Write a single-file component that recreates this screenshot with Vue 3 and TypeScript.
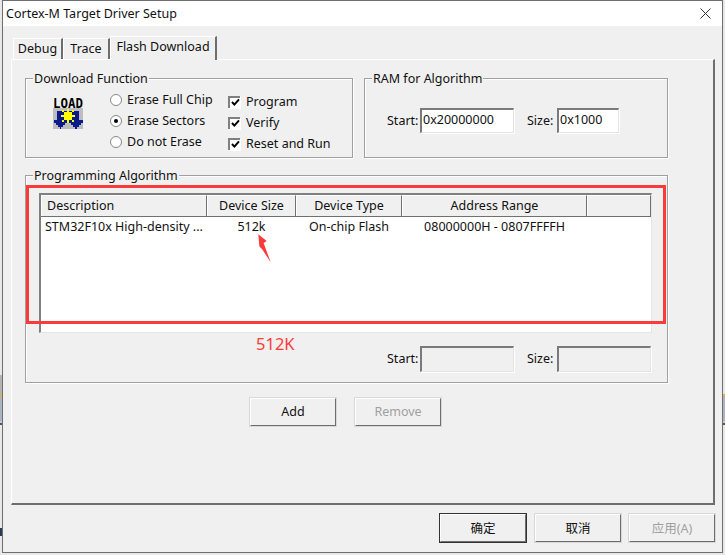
<script setup lang="ts">
const radios = [
  { label: 'Erase Full Chip', on: false },
  { label: 'Erase Sectors', on: true },
  { label: 'Do not Erase', on: false },
]
const checks = ['Program', 'Verify', 'Reset and Run']
const columns = [
  { label: 'Description', width: 166, cls: 'left' },
  { label: 'Device Size', width: 89, cls: '' },
  { label: 'Device Type', width: 106, cls: '' },
  { label: 'Address Range', width: 185, cls: '' },
  { label: '', width: 64, cls: '' },
]
</script>

<template>
  <div class="page">
    <div class="window">
      <header class="titlebar">
        <span>Cortex-M Target Driver Setup</span>
        <svg class="close" width="11" height="11" viewBox="0 0 11 11">
          <path d="M.5.5l10 10M10.5.5l-10 10" stroke="#333" stroke-width="1" fill="none" />
        </svg>
      </header>
      <main class="client">
        <nav class="tabs">
          <span class="tab debug">Debug</span>
          <span class="tab trace">Trace</span>
          <span class="tab active">Flash Download</span>
        </nav>
        <section class="panel">
          <div class="top-row">
            <div class="group download">
              <span class="legend">Download Function</span>
              <svg class="load" width="30" height="31" viewBox="0 0 30 31" shape-rendering="crispEdges">
                <rect y="10" width="30" height="21" fill="#bdbdbd" />
                <text x="0" y="10" textLength="30" lengthAdjust="spacingAndGlyphs" class="load-text">LOAD</text>
                <path fill="#0a1a8c" d="M4 13h22v9h4v3h-2v2h-2v2h-2v2h-2v-2h-2v-2h-2v-2h-2v-3h-2v3h-2v2h-2v2h-2v2H7v-2H5v-2H3v-2H1v-3h3z" />
                <g fill="#ffff00">
                  <rect x="11" y="14" width="8" height="8" />
                  <rect x="8" y="17" width="14" height="2" />
                  <rect x="14" y="11" width="2" height="14" />
                  <rect x="9" y="12" width="2" height="2" />
                  <rect x="19" y="12" width="2" height="2" />
                  <rect x="9" y="22" width="2" height="2" />
                  <rect x="19" y="22" width="2" height="2" />
                </g>
              </svg>
              <div class="radios">
                <div v-for="r in radios" :key="r.label" class="radio-row">
                  <span class="radio" :class="{ on: r.on }"></span>{{ r.label }}
                </div>
              </div>
              <div class="checks">
                <div v-for="c in checks" :key="c" class="check-row">
                  <span class="check">
                    <svg width="9" height="9" viewBox="0 0 9 9"><path d="M1 4l2.4 2.6L8 1.4" stroke="#000" stroke-width="2" fill="none" /></svg>
                  </span>{{ c }}
                </div>
              </div>
            </div>
            <div class="group ram">
              <span class="legend">RAM for Algorithm</span>
              <span class="field-label start">Start:</span>
              <span class="input w-start">0x20000000</span>
              <span class="field-label size">Size:</span>
              <span class="input w-size">0x1000</span>
            </div>
          </div>
          <div class="group algo">
            <span class="legend">Programming Algorithm</span>
            <div class="list">
              <div class="list-head">
                <span
                  v-for="c in columns"
                  :key="c.width"
                  class="head-cell"
                  :class="c.cls"
                  :style="{ width: c.width + 'px' }"
                >{{ c.label }}</span>
              </div>
              <div class="list-row">
                <span class="cell desc">STM32F10x High-density ...</span>
                <span class="cell dsize">512k</span>
                <span class="cell dtype">On-chip Flash</span>
                <span class="cell range">08000000H - 0807FFFFH</span>
              </div>
            </div>
            <div class="algo-fields">
              <span class="field-label start">Start:</span>
              <span class="input disabled w-start">&nbsp;</span>
              <span class="field-label size">Size:</span>
              <span class="input disabled w-wide">&nbsp;</span>
            </div>
          </div>
          <div class="actions">
            <button class="btn">Add</button>
            <button class="btn off">Remove</button>
          </div>
        </section>
        <footer class="footer">
          <button class="btn default">确定</button>
          <button class="btn">取消</button>
          <button class="btn off">应用(A)</button>
        </footer>
      </main>
    </div>
    <div class="red-box"></div>
    <svg class="red-arrow" width="20" height="32" viewBox="0 0 20 32">
      <path d="M1.3.3L9.7 7L6.6 9L13.7 28.3L5 15L2.4 12.5Z" fill="#fb3a3a" />
    </svg>
    <span class="red-label">512K</span>
  </div>
</template>

<style>
html, body { margin: 0; background: #e6e6e6; }
</style>

<style scoped>
.page {
  position: relative;
  width: 725px;
  height: 555px;
  overflow: hidden;
  background:
    linear-gradient(
      transparent 0 375px,
      #b4b4b4 375px 394px,
      transparent 394px 528px,
      #2a3a55 528px 536px,
      transparent 536px
    ) left top / 2px 100% no-repeat,
    linear-gradient(
      #e8e8e8 0 394px,
      #d9b450 394px 397px,
      #a9b4c4 397px 421px,
      #c8c8c8 421px 423px,
      #555 423px 425px,
      #e8e8e8 425px
    );
  font-family: "Noto Sans", "Noto Sans CJK SC", sans-serif;
  font-size: 12.5px;
  color: #111;
}
.window {
  box-sizing: border-box;
  width: 721px;
  height: 553px;
  margin-left: 2px;
  border: 1px solid #6e6e6e;
  display: flex;
  flex-direction: column;
  background: #f0f0f0;
}
.titlebar {
  height: 25px;
  flex: none;
  background: #fff;
  display: flex;
  align-items: center;
  justify-content: space-between;
  padding: 0 11px 0 3px;
  font-size: 12.5px;
}
.client {
  flex: 1;
  padding: 10px 6px 0 8px;
  display: flex;
  flex-direction: column;
}
.tabs {
  height: 23px;
  display: flex;
  align-items: flex-end;
  padding-left: 2px;
  position: relative;
  z-index: 1;
}
.tab {
  box-sizing: border-box;
  height: 21px;
  padding-bottom: 2px;
  display: flex;
  align-items: center;
  justify-content: center;
  border-top: 1px solid #fff;
  border-left: 1px solid #fff;
  border-right: 2px solid #6e6e6e;
  background: #f0f0f0;
}
.debug { width: 50px; }
.trace { width: 47px; }
.tab.active {
  width: 107px;
  height: 24px;
  margin-bottom: -1px;
  padding-bottom: 4px;
}
.panel {
  box-sizing: border-box;
  width: 704px;
  height: 446px;
  border-top: 1px solid #fff;
  border-left: 1px solid #fff;
  border-right: 2px solid #6e6e6e;
  border-bottom: 2px solid #6e6e6e;
  padding: 18px 0 0 13px;
}
.top-row {
  display: flex;
  gap: 11px;
}
.group {
  box-sizing: border-box;
  position: relative;
  border: 1px solid #a0a0a0;
  box-shadow: 1px 1px 0 #fff, inset 1px 1px 0 #fff;
}
.legend {
  position: absolute;
  left: 7px;
  top: -9px;
  padding: 0 1px;
  line-height: 17px;
  background: #f0f0f0;
}
.download {
  width: 328px;
  height: 80px;
  display: flex;
  padding: 10px 0 0 0;
}
.load {
  margin: 9px 0 0 27px;
  flex: none;
  overflow: visible;
}
.load-text {
  font-family: "DejaVu Sans Mono", monospace;
  font-weight: bold;
  font-size: 13.5px;
  fill: #000;
}
.radios {
  margin-left: 27px;
  width: 118px;
}
.radio-row {
  height: 21px;
  display: flex;
  align-items: center;
  gap: 5px;
}
.radio {
  box-sizing: border-box;
  width: 12px;
  height: 12px;
  border-radius: 50%;
  border: 1px solid #8a8a8a;
  background: #fff;
  box-shadow: 0.5px 0.5px 0 #e8e8e8;
  display: flex;
  align-items: center;
  justify-content: center;
}
.radio.on::after {
  content: "";
  width: 4px;
  height: 4px;
  border-radius: 50%;
  background: #000;
}
.checks {
  margin-top: 2px;
}
.check-row {
  height: 21px;
  display: flex;
  align-items: center;
  gap: 6px;
}
.check {
  box-sizing: border-box;
  width: 12px;
  height: 12px;
  border-top: 2px solid #808080;
  border-left: 2px solid #808080;
  background: #fff;
  box-shadow: 1px 1px 0 #fff;
  display: flex;
  align-items: center;
  justify-content: center;
}
.ram {
  width: 304px;
  height: 80px;
  display: flex;
  align-items: center;
  padding: 4px 0 0 22px;
}
.field-label { flex: none; }
.field-label.start { width: 33px; }
.field-label.size { width: 30px; margin-left: 13px; }
.input {
  box-sizing: border-box;
  height: 25px;
  border-top: 2px solid #7a7a7a;
  border-left: 2px solid #7a7a7a;
  border-right: 1px solid #e4e4e4;
  border-bottom: 1px solid #e4e4e4;
  background: #fff;
  padding: 0 0 3px 1px;
  line-height: 20px;
  box-shadow: 1px 1px 0 #fff;
}
.input.disabled { background: #f0f0f0; height: 26px; }
.w-start { width: 94px; }
.w-size { width: 62px; }
.w-wide { width: 94px; }
.algo {
  width: 643px;
  height: 208px;
  margin-top: 17px;
  padding: 17px 0 0 13px;
}
.list {
  box-sizing: border-box;
  width: 613px;
  height: 140px;
  border-top: 2px solid #808080;
  border-left: 2px solid #808080;
  border-right: 1px solid #e4e4e4;
  border-bottom: 1px solid #e4e4e4;
  background: #fff;
}
.list-head {
  display: flex;
  height: 21px;
  border-bottom: 1px solid #707070;
  background: #f0f0f0;
}
.head-cell {
  box-sizing: border-box;
  height: 21px;
  padding-bottom: 2px;
  display: flex;
  align-items: center;
  justify-content: center;
  border-top: 1px solid #fff;
  border-left: 1px solid #fff;
  border-right: 1px solid #707070;
}
.head-cell.left {
  justify-content: flex-start;
  padding-left: 5px;
}
.list-row {
  display: flex;
  height: 18px;
  align-items: center;
}
.cell { flex: none; white-space: nowrap; }
.desc { width: 166px; padding-left: 4px; box-sizing: border-box; }
.dsize { width: 89px; text-align: center; }
.dtype { width: 106px; text-align: center; }
.range { width: 185px; text-align: center; }
.algo-fields {
  display: flex;
  align-items: center;
  height: 26px;
  margin: 13px 0 0 348px;
}
.algo-fields .field-label { padding-bottom: 2px; }
.actions {
  display: flex;
  gap: 17px;
  margin: 14px 0 0 224px;
}
.btn {
  box-sizing: border-box;
  width: 88px;
  height: 30px;
  padding: 0 0 2px;
  font: inherit;
  color: #111;
  background: #f0f0f0;
  border-top: 2px solid #fff;
  border-left: 2px solid #fff;
  border-right: 2px solid #6e6e6e;
  border-bottom: 2px solid #6e6e6e;
  outline: 1px solid #d8d8d8;
  outline-offset: -1px;
}
.btn.off { color: #a0a0a0; }
.btn.default { outline: 1px solid #333; margin-right: 1px; }
.footer {
  display: flex;
  justify-content: flex-end;
  gap: 6px;
  margin-top: 8px;
}
.red-box {
  box-sizing: border-box;
  position: absolute;
  left: 26px;
  top: 185px;
  width: 640px;
  height: 139px;
  border: 3px solid #fb3a3a;
}
.red-arrow {
  position: absolute;
  left: 257px;
  top: 234px;
}
.red-label {
  position: absolute;
  left: 256px;
  top: 332px;
  color: #fb3a3a;
  font-size: 16.5px;
  line-height: 23px;
}
.close { flex: none; }
</style>
